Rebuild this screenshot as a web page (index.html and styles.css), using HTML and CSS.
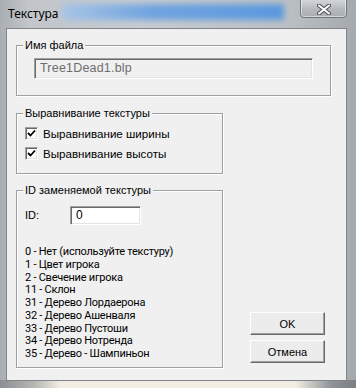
FILE: index.html
```html
<!DOCTYPE html>
<html lang="ru">
<head>
    <meta charset="UTF-8">
    <meta name="viewport" content="width=device-width, initial-scale=1.0">
    <title>Текстура</title>
    <link rel="stylesheet" href="styles.css">
</head>
<body>
  <div class="window">
    <div class="titlebar">
      <span class="glow"></span>
      <span class="title">Текстура</span>
      <span class="close">
        <svg width="14" height="11" viewBox="0 0 14 11">
          <path d="M2 1.5 L12 9.5 M12 1.5 L2 9.5" stroke="#4a5058" stroke-width="4" stroke-linecap="round"/>
          <path d="M2 1.5 L12 9.5 M12 1.5 L2 9.5" stroke="#ffffff" stroke-width="2" stroke-linecap="round"/>
        </svg>
      </span>
    </div>

    <div class="client">
      <div class="group group-file">
        <span class="legend">Имя файла</span>
        <div class="edit edit-disabled">Tree1Dead1.blp</div>
      </div>

      <div class="row">
        <div class="left-col">
          <div class="group group-align">
            <span class="legend">Выравнивание текстуры</span>
            <label class="check-row"><span class="check"><svg width="9" height="9" viewBox="0 0 9 9"><path d="M1 4 L3.5 6.5 L8 1.5" stroke="#000" stroke-width="1.8" fill="none"/></svg></span>Выравнивание ширины</label>
            <label class="check-row"><span class="check"><svg width="9" height="9" viewBox="0 0 9 9"><path d="M1 4 L3.5 6.5 L8 1.5" stroke="#000" stroke-width="1.8" fill="none"/></svg></span>Выравнивание высоты</label>
          </div>

          <div class="group group-id">
            <span class="legend">ID заменяемой текстуры</span>
            <div class="id-row">
              <span class="id-label">ID:</span>
              <div class="edit edit-id">0</div>
            </div>
            <ul class="id-list">
              <li>0 - Нет (используйте текстуру)</li>
              <li>1 - Цвет игрока</li>
              <li>2 - Свечение игрока</li>
              <li>11 - Склон</li>
              <li>31 - Дерево Лордаерона</li>
              <li>32 - Дерево Ашенваля</li>
              <li>33 - Дерево Пустоши</li>
              <li>34 - Дерево Нотренда</li>
              <li>35 - Дерево - Шампиньон</li>
            </ul>
          </div>
        </div>

        <div class="buttons">
          <button class="btn">OK</button>
          <button class="btn">Отмена</button>
        </div>
      </div>
    </div>
  </div>
</body>
</html>
```

FILE: styles.css
```css
body {
  margin: 0;
  font-family: "Liberation Sans", Arial, sans-serif;
  font-size: 11px;
  color: #000;
}
.window {
  width: 356px;
  height: 388px;
  display: flex;
  flex-direction: column;
  overflow: hidden;
  background:
    linear-gradient(to right, #8a8e93 0, #b9b8b3 10%, #f3eee4 17%, #f2ede3 83%, #8f9398 93%, #7b7f84 100%) bottom / 100% 8px no-repeat,
    linear-gradient(to right, #a9aeb3 0, #c2c6ca 8%, #c8ccd0 40%, #bdc1c5 80%, #a4a9ae 100%);
}
.titlebar {
  position: relative;
  height: 29px;
  flex: none;
}
.glow {
  position: absolute;
  left: 62px;
  top: 4px;
  width: 222px;
  height: 16px;
  background: linear-gradient(to right, #a7c4e6, #6fa4e0 40%, #5a98df 100%);
  filter: blur(3px);
}
.title {
  position: absolute;
  left: 8px;
  top: 6px;
  font-family: "Noto Sans", "Open Sans", sans-serif;
  font-size: 12px;
  line-height: 16px;
}
.close {
  position: absolute;
  left: 300px;
  top: -2px;
  width: 45px;
  height: 18px;
  border: 1px solid #70767d;
  border-radius: 0 0 4px 4px;
  background: linear-gradient(#d5d8dc, #b6babf 55%, #a9aeb4);
  box-shadow: inset 0 0 0 1px rgba(255, 255, 255, 0.5);
  display: flex;
  align-items: center;
  justify-content: center;
}
.close svg {
  margin-top: 3px;
}
.client {
  flex: 1;
  margin: 0 10px 8px 7px;
  padding: 16px 0 0 9px;
  background: #f0f0f0;
  box-shadow: 0 0 0 1px #80858b;
}
.group {
  position: relative;
  box-sizing: border-box;
  border: 1px solid #a0a0a0;
  box-shadow: inset 1px 1px #fff, 1px 1px #fff;
}
.legend {
  position: absolute;
  top: -8px;
  left: 6px;
  padding: 0 2px;
  background: #f0f0f0;
  line-height: 14px;
}
.group-file {
  width: 315px;
  height: 51px;
  padding: 12px 0 0 17px;
}
.edit {
  box-sizing: border-box;
  border: 1px solid;
  border-color: #a0a0a0 #fff #fff #a0a0a0;
  box-shadow: inset 1px 1px #696969, inset -1px -1px #e3e3e3;
  padding-left: 5px;
}
.edit-disabled {
  width: 279px;
  height: 21px;
  line-height: 19px;
  font-size: 12.5px;
  letter-spacing: 0.2px;
  color: #6d6d6d;
  background: #f0f0f0;
}
.row {
  display: flex;
  margin-top: 17px;
}
.left-col {
  width: 207px;
}
.group-align {
  height: 61px;
  padding: 13px 0 0 8px;
}
.check-row {
  display: flex;
  align-items: center;
  height: 13px;
  margin-bottom: 7px;
  font-size: 11.6px;
}
.check {
  box-sizing: border-box;
  width: 13px;
  height: 13px;
  margin-right: 5px;
  background: #fff;
  border: 1px solid;
  border-color: #a0a0a0 #fff #fff #a0a0a0;
  box-shadow: inset 1px 1px #696969, inset -1px -1px #e3e3e3;
  display: flex;
  align-items: center;
  justify-content: center;
}
.group-id {
  height: 178px;
  margin-top: 16px;
  padding: 15px 8px 0 8px;
}
.id-row {
  display: flex;
  align-items: flex-start;
}
.id-label {
  width: 45px;
  margin-top: 3px;
}
.edit-id {
  width: 71px;
  height: 19px;
  line-height: 17px;
  font-size: 12px;
  background: #fff;
}
.id-list {
  list-style: none;
  margin: 21px 0 0 0;
  padding: 0;
  font-family: Roboto, "Liberation Sans", sans-serif;
  font-size: 11px;
  letter-spacing: -0.25px;
  line-height: 12.75px;
}
.buttons {
  display: flex;
  flex-direction: column;
  justify-content: flex-end;
  margin-left: 27px;
  padding-bottom: 5px;
}
.btn {
  width: 75px;
  height: 23px;
  margin-top: 5px;
  padding: 0;
  font-family: inherit;
  font-size: 11px;
  background: #ececec;
  border: 1px solid;
  border-color: #fff #696969 #696969 #fff;
  box-shadow: inset -1px -1px #a0a0a0;
}
```
